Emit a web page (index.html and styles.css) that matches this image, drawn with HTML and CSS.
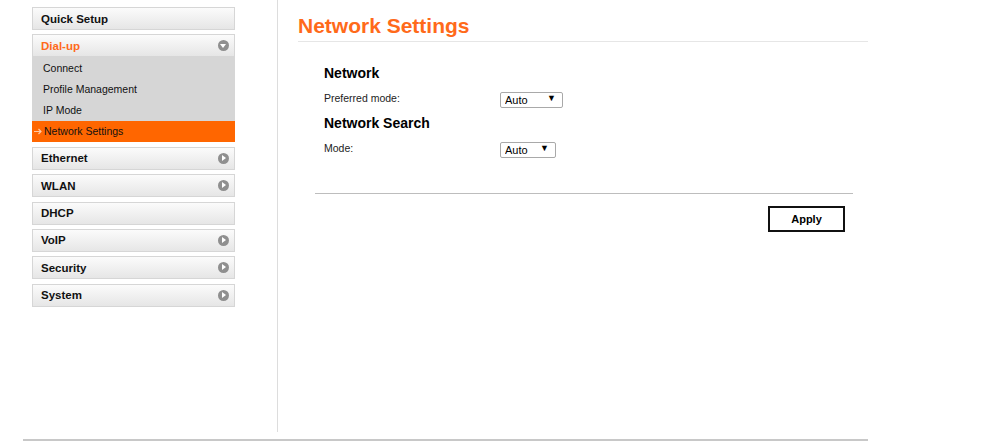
FILE: index.html
```html
<!DOCTYPE html>
<html lang="en">

<head>
  <meta charset="UTF-8">
  <title>Network Settings</title>
  <link rel="stylesheet" href="styles.css">
</head>

<body>
  <div class="page">
    <div class="main">
      <div class="sidebar">
        <ul class="menu">
          <li class="menu-item"><a href="#">Quick Setup</a></li>
          <li class="menu-item open">
            <a href="#" class="active">Dial-up <span class="arrow down"></span></a>
            <ul class="submenu">
              <li><a href="#">Connect</a></li>
              <li><a href="#">Profile Management</a></li>
              <li><a href="#">IP Mode</a></li>
              <li class="current">
                <a href="#">
                  <svg class="mark" width="8" height="7" viewBox="0 0 8 7">
                    <path d="M0 3.5 H7 M4.5 1 L7 3.5 L4.5 6" stroke="#ffc9a3" stroke-width="1.2" fill="none" />
                  </svg>Network Settings
                </a>
              </li>
            </ul>
          </li>
          <li class="menu-item"><a href="#">Ethernet <span class="arrow"></span></a></li>
          <li class="menu-item"><a href="#">WLAN <span class="arrow"></span></a></li>
          <li class="menu-item"><a href="#">DHCP</a></li>
          <li class="menu-item"><a href="#">VoIP <span class="arrow"></span></a></li>
          <li class="menu-item"><a href="#">Security <span class="arrow"></span></a></li>
          <li class="menu-item"><a href="#">System <span class="arrow"></span></a></li>
        </ul>
      </div>

      <div class="content">
        <h1>Network Settings</h1>

        <div class="form">
          <h2>Network</h2>
          <div class="form-row">
            <label>Preferred mode:</label>
            <div class="select-wrap wide">
              <select>
                <option>Auto</option>
                <option>4G only</option>
                <option>3G only</option>
              </select>
              <span class="caret">&#9660;</span>
            </div>
          </div>

          <h2>Network Search</h2>
          <div class="form-row">
            <label>Mode:</label>
            <div class="select-wrap">
              <select>
                <option>Auto</option>
                <option>Manual</option>
              </select>
              <span class="caret">&#9660;</span>
            </div>
          </div>
        </div>

        <div class="actions">
          <button class="apply-btn">Apply</button>
        </div>
      </div>
    </div>
    <div class="footer-line"></div>
  </div>
</body>

</html>
```

FILE: styles.css
```css
body {
  font-family: "Liberation Sans", Arial, sans-serif;
  margin: 0;
  padding: 0;
  background-color: #fff;
  color: #000;
}

.page {
  width: 845px;
  margin-left: 23px;
}

.main {
  display: flex;
  height: 432px;
}

.sidebar {
  width: 255px;
  padding: 7px 0 0 9px;
  box-sizing: border-box;
  border-right: 1px solid #ddd;
  flex-shrink: 0;
}

.menu,
.submenu {
  list-style: none;
  margin: 0;
  padding: 0;
}

.menu {
  width: 203px;
}

.menu-item {
  margin-bottom: 4.4px;
}

.menu-item > a {
  display: flex;
  align-items: center;
  justify-content: space-between;
  height: 21px;
  padding: 0 5px 0 8px;
  border: 1px solid #d6d6d6;
  background: linear-gradient(#fbfbfb, #e6e6e6);
  font-size: 11.5px;
  font-weight: bold;
  color: #111;
  text-decoration: none;
}

.menu-item > a.active {
  color: #ff6a1a;
}

.arrow {
  width: 11px;
  height: 11px;
  border-radius: 50%;
  background: #8f8f8f;
  position: relative;
}

.arrow::after {
  content: "";
  position: absolute;
  left: 4px;
  top: 2px;
  border-left: 4px solid #fff;
  border-top: 3.5px solid transparent;
  border-bottom: 3.5px solid transparent;
}

.arrow.down::after {
  left: 2px;
  top: 4px;
  border-top: 4px solid #fff;
  border-left: 3.5px solid transparent;
  border-right: 3.5px solid transparent;
  border-bottom: none;
}

.submenu {
  background-color: #d6d6d6;
  padding-top: 1px;
}

.submenu li a {
  display: block;
  height: 21px;
  line-height: 21px;
  padding-left: 11px;
  font-size: 10.5px;
  color: #111;
  text-decoration: none;
}

.submenu li.current a {
  background-color: #ff6600;
  padding-left: 2px;
}

.mark {
  margin-right: 2px;
}

.content {
  flex: 1;
  padding-left: 20px;
}

h1 {
  margin: 14px 0 0 0;
  padding-bottom: 3px;
  font-size: 21px;
  color: #ff6a1a;
  border-bottom: 1px solid #e6e6e6;
}

.form {
  padding: 23px 0 0 26px;
}

h2 {
  margin: 0 0 9px 0;
  font-size: 14px;
  font-weight: bold;
}

.form-row {
  display: flex;
  align-items: center;
  height: 16px;
  margin-bottom: 9px;
}

.form-row label {
  width: 176px;
  font-size: 10.5px;
  color: #222;
}

.select-wrap {
  position: relative;
  width: 56px;
  height: 16px;
}

.select-wrap.wide {
  width: 63px;
}

.select-wrap select {
  appearance: none;
  -webkit-appearance: none;
  width: 100%;
  height: 16px;
  margin: 0;
  padding: 0 0 0 4px;
  border: 1px solid #a9a9a9;
  border-radius: 2px;
  background: #fff;
  font-family: "Liberation Sans", Arial, sans-serif;
  font-size: 11px;
  color: #000;
}

.caret {
  position: absolute;
  right: 7px;
  top: 4px;
  font-size: 9px;
  line-height: 9px;
  pointer-events: none;
}

.actions {
  margin: 37px 15px 0 17px;
  padding-top: 12px;
  border-top: 1px solid #bdbdbd;
  display: flex;
  justify-content: flex-end;
}

.apply-btn {
  width: 77px;
  height: 26px;
  margin-right: 8px;
  border: 2px solid #111;
  background: #fff;
  font-family: "Liberation Sans", Arial, sans-serif;
  font-size: 11px;
  font-weight: bold;
  cursor: pointer;
}

.footer-line {
  margin-top: 7px;
  height: 2px;
  background-color: #c8c8c8;
}
```
